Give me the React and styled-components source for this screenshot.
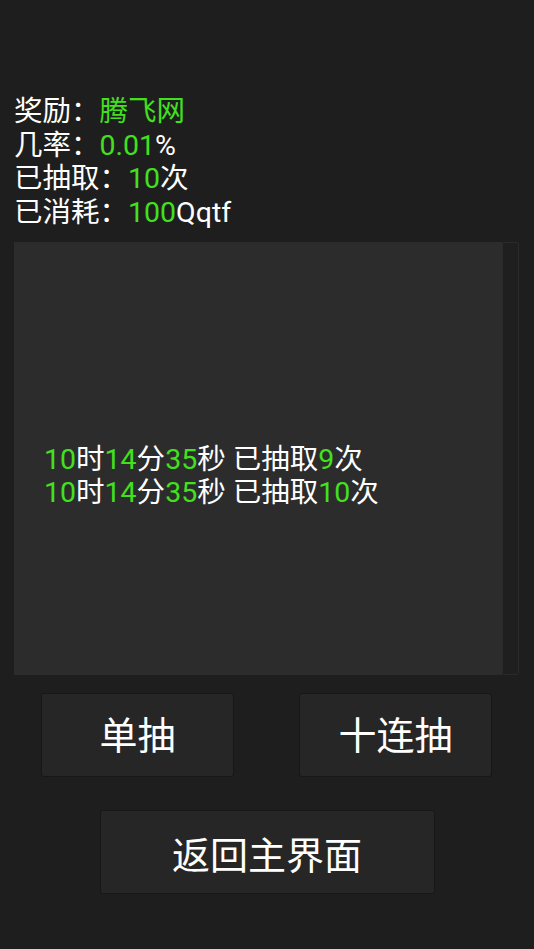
import styled, { createGlobalStyle } from 'styled-components';

const GlobalStyle = createGlobalStyle`
  html, body {
    margin: 0;
    padding: 0;
    background: #1e1e1e;
  }
  body {
    font-family: Roboto, "Noto Sans CJK SC", sans-serif;
    color: #ffffff;
  }
`;

const GREEN = '#42e01e';

const logs = [
  { h: 10, m: 14, s: 35, n: 9 },
  { h: 10, m: 14, s: 35, n: 10 },
];

function App() {
  return (
    <Page>
      <GlobalStyle />
      <Info>
        <Line>奖励：<G>腾飞网</G></Line>
        <Line>几率：<G>0.01</G>%</Line>
        <Line>已抽取：<G>10</G>次</Line>
        <Line>已消耗：<G>100</G>Qqtf</Line>
      </Info>

      <Panel>
        <Log>
          {logs.map((l, i) => (
            <Line key={i}>
              <G>{l.h}</G>时<G>{l.m}</G>分<G>{l.s}</G>秒 已抽取<G>{l.n}</G>次
            </Line>
          ))}
        </Log>
        <ScrollTrack />
      </Panel>

      <ButtonRow>
        <Button $w={193}>单抽</Button>
        <Button $w={193}>十连抽</Button>
      </ButtonRow>
      <BackRow>
        <Button $w={335}>返回主界面</Button>
      </BackRow>
    </Page>
  );
}

const Page = styled.div`
  width: 534px;
  height: 949px;
  background: #1e1e1e;
  padding-top: 95px;
  box-sizing: border-box;
`;

const Info = styled.div`
  padding-left: 14px;
  height: 129px;
`;

const Line = styled.div`
  font-size: 28.5px;
  line-height: 33.5px;
  white-space: nowrap;
  color: #ffffff;
`;

const G = styled.span`
  color: ${GREEN};
`;

const Panel = styled.div`
  margin: 18px 15px 0 14px;
  height: 433px;
  display: flex;
`;

const Log = styled.div`
  flex: 1;
  background: #2c2c2c;
  padding: 201px 0 0 30px;
  box-sizing: border-box;

  ${Line} {
    line-height: 33px;
  }
`;

const ScrollTrack = styled.div`
  width: 17px;
  background: #1f1f1f;
  border: 1px solid #2a2a2a;
  border-radius: 2px;
  box-sizing: border-box;
`;

const Button = styled.div`
  width: ${(p) => p.$w}px;
  height: 84px;
  box-sizing: border-box;
  background: #262626;
  border: 1px solid #171717;
  border-radius: 3px;
  display: flex;
  align-items: center;
  justify-content: center;
  font-size: 38px;
  color: #ffffff;
  font-family: "Noto Sans CJK SC", sans-serif;
`;

const ButtonRow = styled.div`
  display: flex;
  justify-content: space-between;
  padding: 0 42px 0 41px;
  margin-top: 18px;

  ${Button} {
    padding-bottom: 6px;
  }
`;

const BackRow = styled.div`
  display: flex;
  justify-content: center;
  margin-top: 33px;
`;

export default App;
